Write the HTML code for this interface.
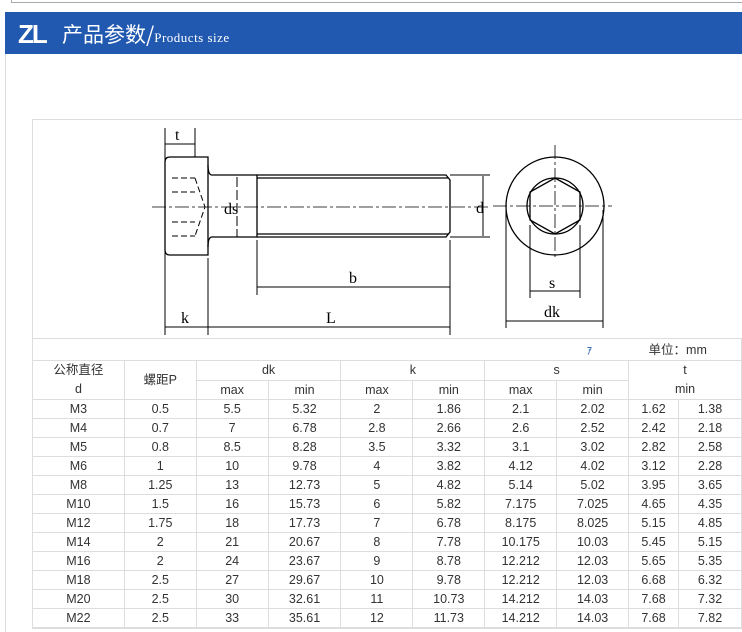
<!DOCTYPE html>
<html><head><meta charset="utf-8"><style>
body{margin:0;width:742px;height:632px;overflow:hidden;background:#fff;position:relative;font-family:"Liberation Sans","Noto Sans CJK SC",sans-serif}
.top{position:absolute;left:11px;top:0;width:731px;height:2px;border-bottom:1px solid #aaa;border-left:1px solid #aaa}
.lb{position:absolute;left:5px;top:54px;width:1px;height:578px;background:#ddd}
.ban{position:absolute;left:5px;top:12px;width:737px;height:42px;background:#2159b0;color:#fff}
.zl{position:absolute;left:13px;top:9px;font:bold 26px "Liberation Sans",sans-serif;letter-spacing:-2px;line-height:26px}
.tt{position:absolute;left:57px;top:10px;font-size:21px;line-height:24px;font-family:"Noto Sans CJK SC",sans-serif}
.tt small{font:13px "Liberation Serif",serif;letter-spacing:.5px}
.box{position:absolute;left:32px;top:119px;width:709px;height:508px;border:1px solid #ddd}
svg{position:absolute;left:0;top:0}
table{position:absolute;left:32px;top:338px;border-collapse:collapse;font-size:12.5px;color:#333}
td{border:1px solid #ddd;text-align:center;padding:0;height:18px;line-height:18px}
</style></head><body>
<div class="top"></div><div class="lb"></div>
<div class="ban"><div class="zl">ZL</div><div class="tt">产品参数/<small>Products size</small></div></div>
<div class="box"></div>
<svg width="742" height="340" viewBox="0 0 742 340" fill="none" stroke="#000" stroke-width="1.3">
<path d="M170 157H208V255H170Q165 255 165 250V162Q165 157 170 157Z"/>
<path d="M208 165Q208 175 212 175H257V237H212Q208 237 208 247"/>
<path d="M257 175H446L450 180V232L446 237H257M257 178H448M257 234H448"/>
<path d="M172 178H195M172 192H195M172 222H195M172 236H195" stroke-dasharray="6 3" stroke-width="1"/>
<path d="M195 178L205 207L195 236" stroke-dasharray="6 3" stroke-width="1"/>
<path d="M152 207H490" stroke-width=".8" stroke-dasharray="14 3 3 3"/>
<path d="M237 177V237" stroke-width="1" stroke-dasharray="10 3"/>
<path d="M165 128V335M195 128V157M208 258V335M257 240V295M450 240V335M450 175H490M450 237H490M483 176V236M165 327H450M165 144H195M257 287H450" stroke-width="1"/>
<g fill="#000" stroke="none" font-family="Liberation Serif,serif" font-size="16">
<text x="175" y="140">t</text><text x="224" y="214">ds</text><text x="349" y="283">b</text><text x="181" y="323">k</text><text x="326" y="323">L</text><text x="476" y="213">d</text><text x="549" y="288">s</text><text x="544" y="317">dk</text></g>
<circle cx="555" cy="206" r="49"/><circle cx="555" cy="206" r="28"/>
<path d="M555 178L580 192V220L555 234L530 220V192Z"/>
<path d="M493 206H612M555 145V260" stroke-width=".8" stroke-dasharray="14 3 3 3"/>
<path d="M506 210V328M603 210V328M530 225V298M580 225V298M530 291H580M506 321H603" stroke-width="1"/>
</svg>
<table>
<tr><td colspan="8" style="height:21px;text-align:right;padding-right:36px;border-right:none"><span style="color:#2159b0">ｧ</span></td><td colspan="2" style="border-left:none;text-align:left;padding-left:20px">单位：mm</td></tr>
<tr><td rowspan="2" style="width:91px;line-height:19px">公称直径<br>d</td><td rowspan="2" style="width:71px">螺距P</td><td colspan="2">dk</td><td colspan="2">k</td><td colspan="2">s</td><td colspan="2" rowspan="2" style="line-height:19px">t<br>min</td></tr>
<tr><td style="width:71px">max</td><td style="width:72px">min</td><td style="width:71px">max</td><td style="width:71px">min</td><td style="width:71px">max</td><td style="width:71px">min</td></tr>
<tr><td>M3</td><td>0.5</td><td>5.5</td><td>5.32</td><td>2</td><td>1.86</td><td>2.1</td><td>2.02</td><td style="width:49px">1.62</td><td style="width:62px">1.38</td></tr>
<tr><td>M4</td><td>0.7</td><td>7</td><td>6.78</td><td>2.8</td><td>2.66</td><td>2.6</td><td>2.52</td><td>2.42</td><td>2.18</td></tr>
<tr><td>M5</td><td>0.8</td><td>8.5</td><td>8.28</td><td>3.5</td><td>3.32</td><td>3.1</td><td>3.02</td><td>2.82</td><td>2.58</td></tr>
<tr><td>M6</td><td>1</td><td>10</td><td>9.78</td><td>4</td><td>3.82</td><td>4.12</td><td>4.02</td><td>3.12</td><td>2.28</td></tr>
<tr><td>M8</td><td>1.25</td><td>13</td><td>12.73</td><td>5</td><td>4.82</td><td>5.14</td><td>5.02</td><td>3.95</td><td>3.65</td></tr>
<tr><td>M10</td><td>1.5</td><td>16</td><td>15.73</td><td>6</td><td>5.82</td><td>7.175</td><td>7.025</td><td>4.65</td><td>4.35</td></tr>
<tr><td>M12</td><td>1.75</td><td>18</td><td>17.73</td><td>7</td><td>6.78</td><td>8.175</td><td>8.025</td><td>5.15</td><td>4.85</td></tr>
<tr><td>M14</td><td>2</td><td>21</td><td>20.67</td><td>8</td><td>7.78</td><td>10.175</td><td>10.03</td><td>5.45</td><td>5.15</td></tr>
<tr><td>M16</td><td>2</td><td>24</td><td>23.67</td><td>9</td><td>8.78</td><td>12.212</td><td>12.03</td><td>5.65</td><td>5.35</td></tr>
<tr><td>M18</td><td>2.5</td><td>27</td><td>29.67</td><td>10</td><td>9.78</td><td>12.212</td><td>12.03</td><td>6.68</td><td>6.32</td></tr>
<tr><td>M20</td><td>2.5</td><td>30</td><td>32.61</td><td>11</td><td>10.73</td><td>14.212</td><td>14.03</td><td>7.68</td><td>7.32</td></tr>
<tr><td>M22</td><td>2.5</td><td>33</td><td>35.61</td><td>12</td><td>11.73</td><td>14.212</td><td>14.03</td><td>7.68</td><td>7.82</td></tr>
</table>
</body></html>
